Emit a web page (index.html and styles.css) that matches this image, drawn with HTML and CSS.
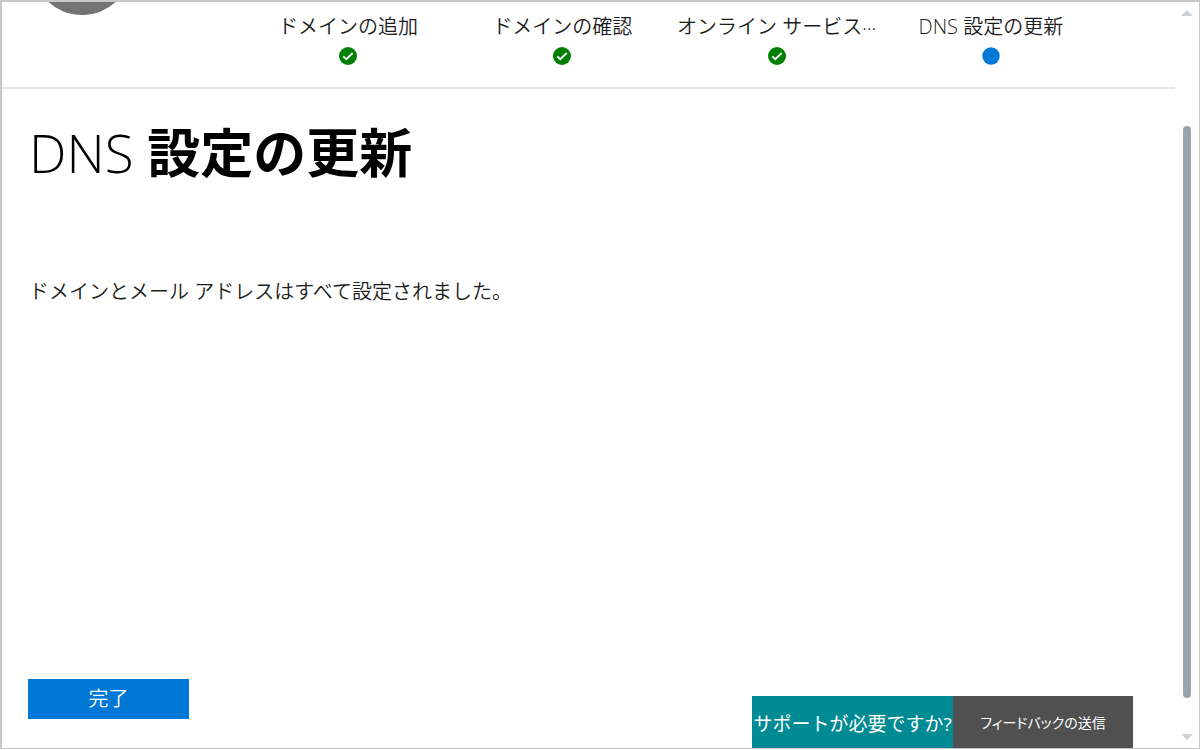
FILE: index.html
```html
<!DOCTYPE html>
<html lang="ja">
<head>
<meta charset="utf-8">
<meta name="viewport" content="width=device-width, initial-scale=1">
<title>DNS 設定の更新</title>
<link rel="stylesheet" href="styles.css">
</head>
<body>
<div class="window">
  <div class="page">
    <header class="header">
      <div class="avatar"></div>
      <ol class="steps">
        <li class="step">
          <span class="step-label">ドメインの追加</span>
          <svg class="step-icon" viewBox="0 0 18 18" aria-hidden="true"><circle cx="9" cy="9" r="9" fill="#008000"/><path d="M4.3 9.3 7.3 12.2 13.7 6" fill="none" stroke="#fff" stroke-width="1.8"/></svg>
        </li>
        <li class="step">
          <span class="step-label">ドメインの確認</span>
          <svg class="step-icon" viewBox="0 0 18 18" aria-hidden="true"><circle cx="9" cy="9" r="9" fill="#008000"/><path d="M4.3 9.3 7.3 12.2 13.7 6" fill="none" stroke="#fff" stroke-width="1.8"/></svg>
        </li>
        <li class="step">
          <span class="step-label">オンライン サービス<span class="ellipsis">…</span></span>
          <svg class="step-icon" viewBox="0 0 18 18" aria-hidden="true"><circle cx="9" cy="9" r="9" fill="#008000"/><path d="M4.3 9.3 7.3 12.2 13.7 6" fill="none" stroke="#fff" stroke-width="1.8"/></svg>
        </li>
        <li class="step" aria-current="step">
          <span class="step-label">DNS 設定の更新</span>
          <svg class="step-icon" viewBox="0 0 18 18" aria-hidden="true"><circle cx="9" cy="9" r="8.7" fill="#0078d7"/></svg>
        </li>
      </ol>
    </header>
    <main class="content">
      <h1 class="title"><span class="title-latin">DNS</span> 設定の更新</h1>
      <p class="message">ドメインとメール アドレスはすべて設定されました。</p>
    </main>
    <footer class="footer">
      <button class="done" type="button">完了</button>
      <div class="help">
        <button class="support" type="button">サポートが必要ですか?</button>
        <button class="feedback" type="button">フィードバックの送信</button>
      </div>
    </footer>
  </div>
  <div class="scrollbar" aria-hidden="true">
    <svg class="arrow" viewBox="0 0 12 6"><path d="M0 6 6 0l6 6z" fill="#cbd2d8"/></svg>
    <div class="track"><div class="thumb"></div></div>
    <svg class="arrow" viewBox="0 0 12 6"><path d="M0 0h12L6 6z" fill="#cbd2d8"/></svg>
  </div>
</div>
</body>
</html>
```

FILE: styles.css
```css
* {
  box-sizing: border-box;
}

body {
  margin: 0;
  background: #fff;
  color: #1c1c1c;
  font-family: "Open Sans", "Noto Sans CJK JP", sans-serif;
  font-size: 20px;
  font-weight: 350;
}

button {
  border: 0;
  padding: 0;
  color: #fff;
  font: inherit;
  white-space: nowrap;
}

.window {
  display: flex;
  min-height: calc(100vh - 1px);
  border: 1px solid #c8c8c8;
  border-width: 2px 1px 1px 2px;
}

.page {
  display: flex;
  flex: 1;
  flex-direction: column;
  min-width: 0;
}

.header {
  position: relative;
  overflow: hidden;
  padding: 10px 77px 22px 239px;
  border-bottom: 2px solid #e6e6e6;
}

.avatar {
  position: absolute;
  top: -87px;
  left: 30px;
  width: 100px;
  height: 100px;
  border-radius: 50%;
  background: #737373;
}

.steps {
  display: grid;
  grid-template-columns: repeat(4, 1fr);
  margin: 0;
  padding: 0;
  list-style: none;
}

.step {
  display: flex;
  flex-direction: column;
  align-items: center;
  gap: 6px;
}

.step-label {
  line-height: 29px;
  white-space: nowrap;
}

.ellipsis {
  font-family: "Noto Sans CJK JP", sans-serif;
  font-size: 14px;
  line-height: 1;
}

.step-icon {
  width: 18px;
  height: 18px;
}

.content {
  flex: 1;
  padding: 26px 27px 0;
}

.title {
  margin: 0;
  color: #000;
  font-size: 53px;
  font-weight: 700;
  line-height: 76px;
}

.title-latin {
  font-weight: 350;
}

.message {
  margin: 86px 0 0;
  line-height: 30px;
}

.footer {
  display: flex;
  align-items: flex-end;
  justify-content: space-between;
  padding: 0 42px 0 26px;
}

.done {
  width: 161px;
  height: 40px;
  margin-bottom: 29px;
  padding-bottom: 3px;
  background: #0078d7;
}

.help {
  display: flex;
}

.support,
.feedback {
  height: 52px;
  font-weight: 400;
}

.support {
  width: 201px;
  padding-top: 2px;
  background: #008a93;
  font-size: 19px;
}

.feedback {
  width: 180px;
  background: #505050;
  font-size: 14px;
  font-feature-settings: "palt";
}

.scrollbar {
  display: flex;
  flex-direction: column;
  align-items: center;
  width: 24px;
  padding: 8px 0;
}

.arrow {
  width: 12px;
  height: 6px;
}

.track {
  flex: 1;
  padding: 110px 0 36px;
}

.thumb {
  width: 8px;
  height: 100%;
  border-radius: 4px;
  background: #98a3ab;
}
```
